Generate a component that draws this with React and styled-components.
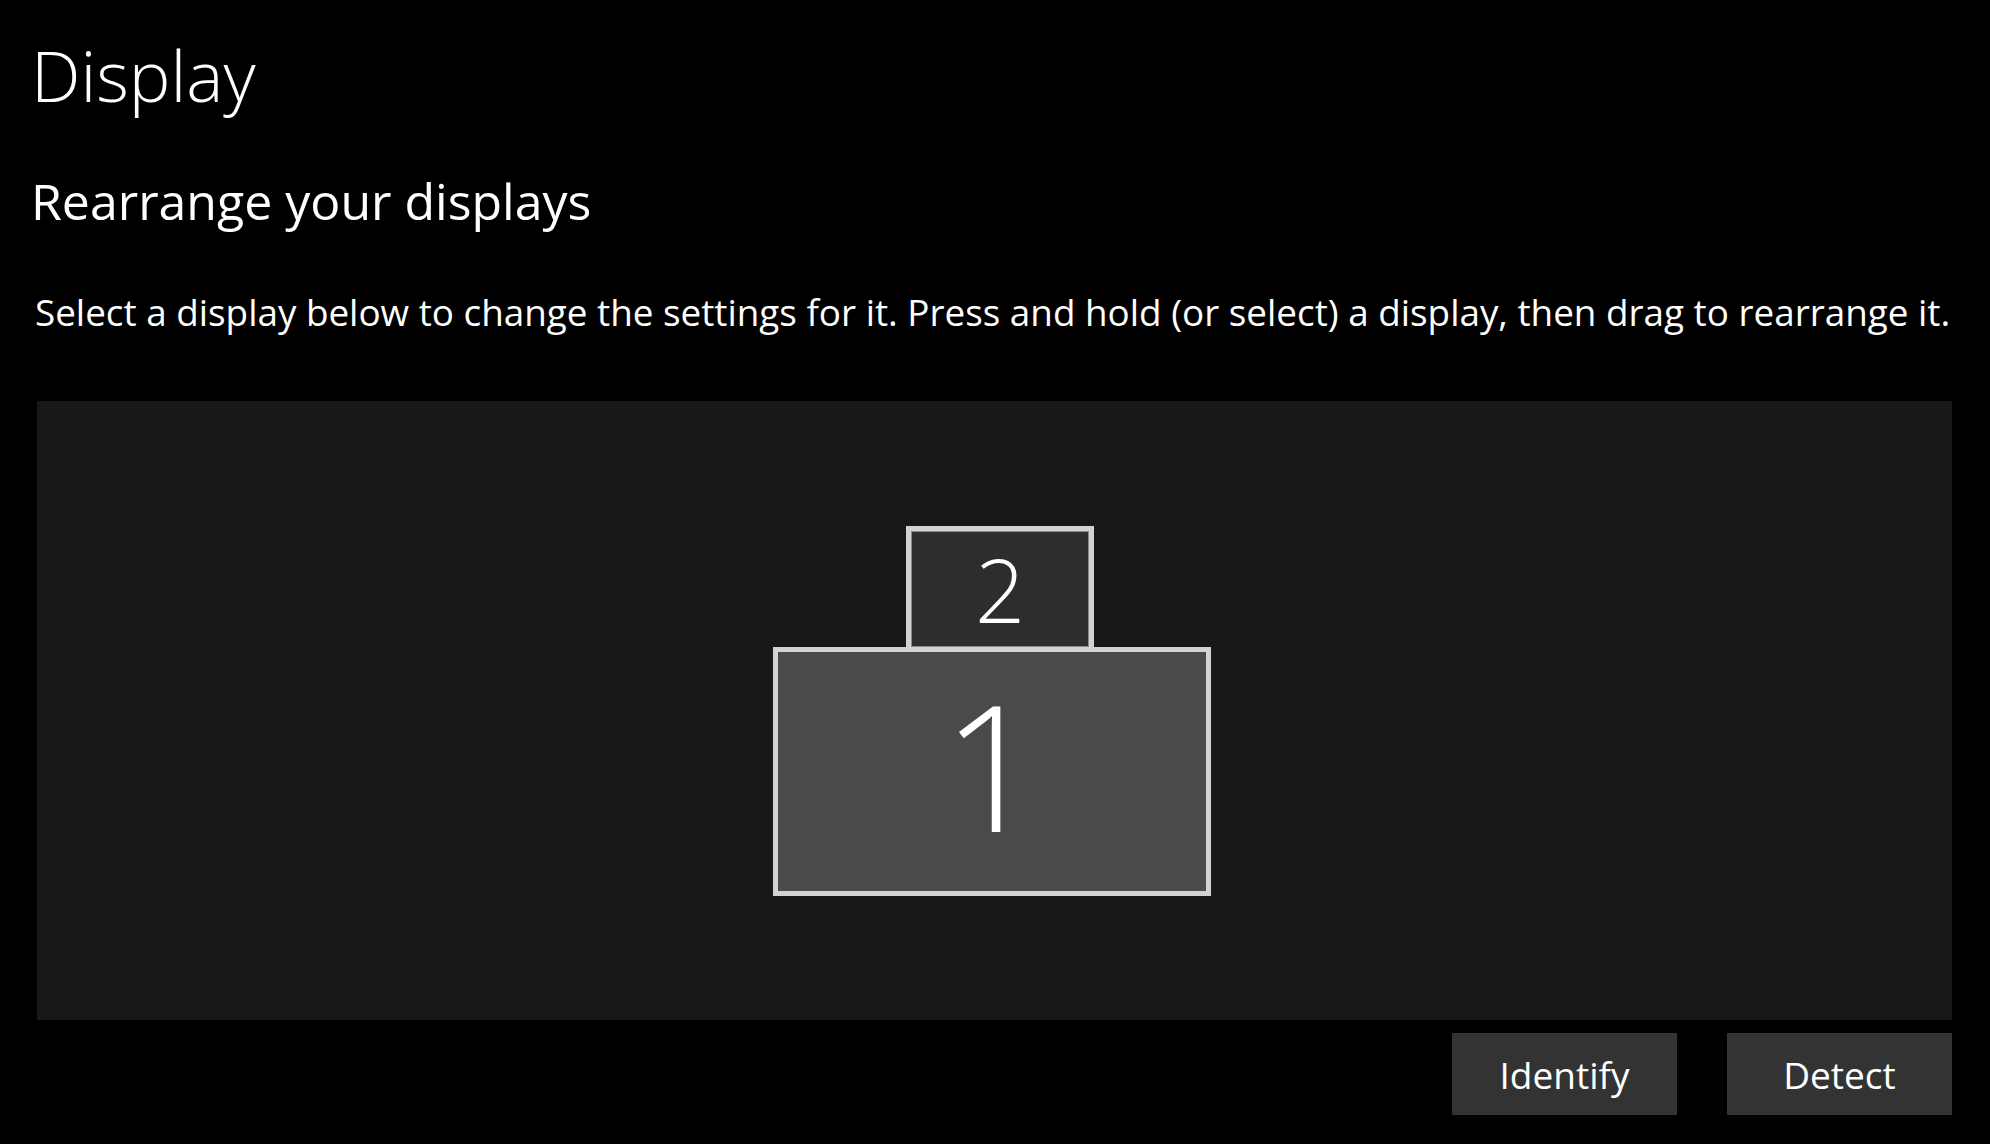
import React from 'react';
import styled, { createGlobalStyle } from 'styled-components';

const GlobalStyle = createGlobalStyle`
  html, body {
    margin: 0;
    padding: 0;
    background: #000;
  }
  body {
    font-family: "Open Sans", "Noto Sans", "Liberation Sans", sans-serif;
    color: #fff;
  }
`;

const Page = styled.div`
  width: 1990px;
  height: 1144px;
  box-sizing: border-box;
  padding: 40px 38px 0 37px;
  display: flex;
  flex-direction: column;
  overflow: hidden;
`;

const Title = styled.h1`
  margin: 0 0 0 -6px;
  font-size: 70px;
  line-height: 70px;
  font-weight: 300;
`;

const Subtitle = styled.h2`
  margin: 66px 0 0 -6px;
  font-size: 50px;
  line-height: 50px;
  font-weight: 400;
`;

const Description = styled.p`
  margin: 68px 0 0 -2px;
  font-size: 36.85px;
  line-height: 37px;
  font-weight: 400;
  white-space: nowrap;
`;

const Arrangement = styled.div`
  margin-top: 70px;
  height: 619px;
  background: #181818;
  display: flex;
  align-items: center;
  justify-content: center;
`;

const MonitorStack = styled.div`
  display: flex;
  flex-direction: column;
  align-items: flex-start;
  margin-left: -5px;
`;

const Monitor = styled.div`
  box-sizing: border-box;
  width: ${(p) => p.$w}px;
  height: ${(p) => p.$h}px;
  margin-left: ${(p) => p.$offset || 0}px;
  margin-top: ${(p) => p.$top || 0}px;
  padding-bottom: ${(p) => p.$lift || 0}px;
  border: 5px solid #d2d2d2;
  background: ${(p) => p.$fill};
  box-shadow: ${(p) => (p.$inner ? 'inset 0 0 0 1px #8a8a8a' : 'none')};
  display: flex;
  align-items: center;
  justify-content: center;
  font-weight: 300;
  font-size: ${(p) => p.$size}px;
  line-height: 1;
  color: #fff;
`;

const ButtonRow = styled.div`
  margin-top: 13px;
  display: flex;
  justify-content: flex-end;
  gap: 50px;
`;

const Button = styled.button`
  width: 225px;
  height: 82px;
  border: none;
  background: #333333;
  color: #fff;
  font-family: inherit;
  font-size: 37px;
  font-weight: 400;
  padding: 0;
  display: flex;
  align-items: center;
  justify-content: center;
`;

export default function App() {
  return (
    <>
      <GlobalStyle />
      <Page>
        <Title>Display</Title>
        <Subtitle>Rearrange your displays</Subtitle>
        <Description>
          Select a display below to change the settings for it. Press and hold (or select) a display, then drag to rearrange it.
        </Description>
        <Arrangement>
          <MonitorStack>
            <Monitor $w={188} $h={126} $offset={133} $fill="#2d2d2d" $size={88} $inner>
              2
            </Monitor>
            <Monitor $w={438} $h={249} $top={-5} $fill="#4b4a48" $size={175} $lift={14}>
              1
            </Monitor>
          </MonitorStack>
        </Arrangement>
        <ButtonRow>
          <Button>Identify</Button>
          <Button>Detect</Button>
        </ButtonRow>
      </Page>
    </>
  );
}
